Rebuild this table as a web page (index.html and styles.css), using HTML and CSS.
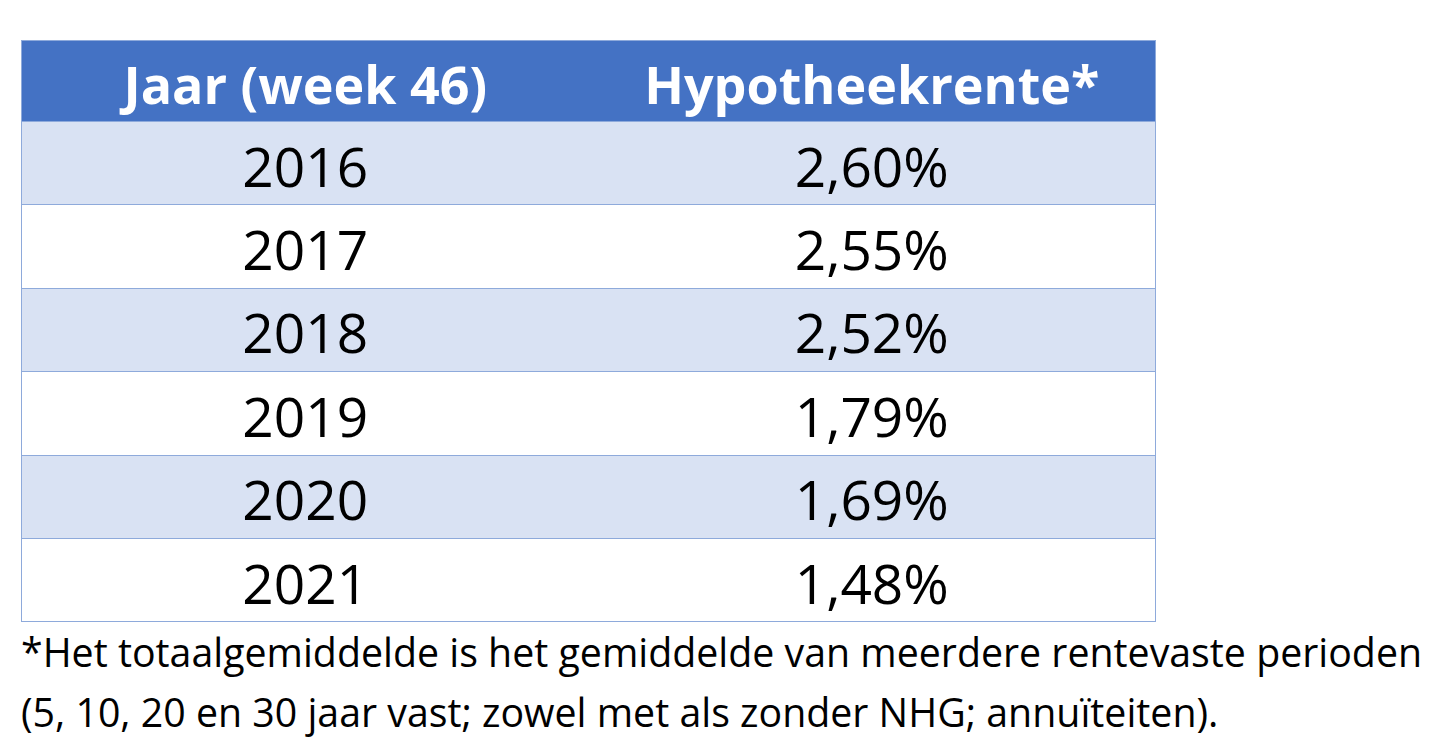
FILE: index.html
```html
<!DOCTYPE html>
<html lang="nl">
<head>
<meta charset="utf-8">
<title>Hypotheekrente week 46</title>
<link rel="stylesheet" href="styles.css">
</head>
<body>
<main class="page">
  <table class="rates">
    <thead>
      <tr class="head-row"><th>Jaar (week 46)</th><th>Hypotheekrente*</th></tr>
    </thead>
    <tbody>
      <tr class="band"><td>2016</td><td>2,60%</td></tr>
      <tr><td>2017</td><td>2,55%</td></tr>
      <tr class="band"><td>2018</td><td>2,52%</td></tr>
      <tr><td>2019</td><td>1,79%</td></tr>
      <tr class="band"><td>2020</td><td>1,69%</td></tr>
      <tr><td>2021</td><td>1,48%</td></tr>
    </tbody>
  </table>
  <p class="note">*Het totaalgemiddelde is het gemiddelde van meerdere rentevaste perioden<br>(5, 10, 20 en 30 jaar vast; zowel met als zonder NHG; annuïteiten).</p>
</main>
</body>
</html>
```
FILE: styles.css
```css
html, body {
  margin: 0;
  padding: 0;
  background: #ffffff;
}
.page {
  padding: 40px 0 0 21px;
  font-family: "Open Sans", "Noto Sans", sans-serif;
  color: #000000;
}
.rates {
  width: 1135px;
  border-collapse: collapse;
  table-layout: fixed;
  border: 1px solid #8eaadb;
}
.rates th,
.rates td {
  width: 50%;
  text-align: center;
  vertical-align: middle;
  padding: 0;
}
.head-row th {
  height: 81px;
  background: #4472c4;
  color: #ffffff;
  font-weight: 700;
  font-size: 52px;
  line-height: 1;
  padding-top: 6px;
  box-sizing: border-box;
}
.rates tbody tr {
  border-top: 1px solid #8eaadb;
}
.rates td {
  height: 83.4px;
  font-size: 55px;
  line-height: 1;
  padding-top: 4px;
  box-sizing: border-box;
}
.rates tr.band td {
  background: #d9e2f3;
}
.note {
  margin: 0;
  font-size: 39.3px;
  line-height: 60px;
  white-space: nowrap;
}
```
